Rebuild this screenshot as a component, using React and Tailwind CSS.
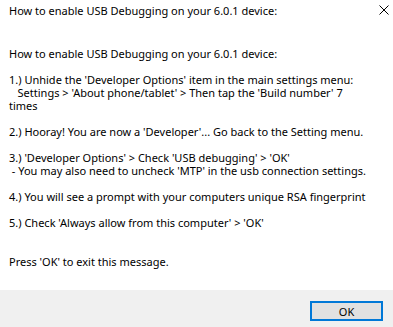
export default function App() {
  const lines = [
    "How to enable USB Debugging on your 6.0.1 device:",
    "",
    "1.) Unhide the 'Developer Options' item in the main settings menu:",
    "   Settings > 'About phone/tablet' > Then tap the 'Build number' 7",
    "times",
    "",
    "2.) Hooray! You are now a 'Developer'... Go back to the Setting menu.",
    "",
    "3.) 'Developer Options' > Check 'USB debugging' > 'OK'",
    " - You may also need to uncheck 'MTP' in the usb connection settings.",
    "",
    "4.) You will see a prompt with your computers unique RSA fingerprint",
    "",
    "5.) Check 'Always allow from this computer' > 'OK'",
    "",
    "",
    "Press 'OK' to exit this message.",
  ];
  return (
    <div
      className="w-[393px] h-[327px] bg-white text-black flex flex-col overflow-hidden"
      style={{ fontFamily: '"Noto Sans", "Open Sans", sans-serif' }}
    >
      <div className="h-[47px] flex items-start justify-between">
        <div className="pl-[9px] pt-[4px] text-[11px] leading-[13px]">
          How to enable USB Debugging on your 6.0.1 device:
        </div>
        <div className="pt-[5px] pr-[4px]">
          <svg width="10" height="10" viewBox="0 0 10 10">
            <path d="M0.5 0.5 L9.5 9.5 M9.5 0.5 L0.5 9.5" stroke="#000" strokeWidth="1" fill="none" />
          </svg>
        </div>
      </div>
      <div className="flex-1 pl-[9px] text-[11px] leading-[13px] whitespace-pre">
        {lines.map((l, i) => (
          <div key={i} className="h-[13px]">{l}</div>
        ))}
      </div>
      <div className="h-[37px] bg-[#f0f0f0] flex justify-end items-start pt-[11px] pr-[10px]">
        <button className="w-[73px] h-[20px] bg-[#e1e1e1] border-2 border-[#0078d7] text-[11px] leading-none text-black flex items-center justify-center">
          OK
        </button>
      </div>
    </div>
  );
}
